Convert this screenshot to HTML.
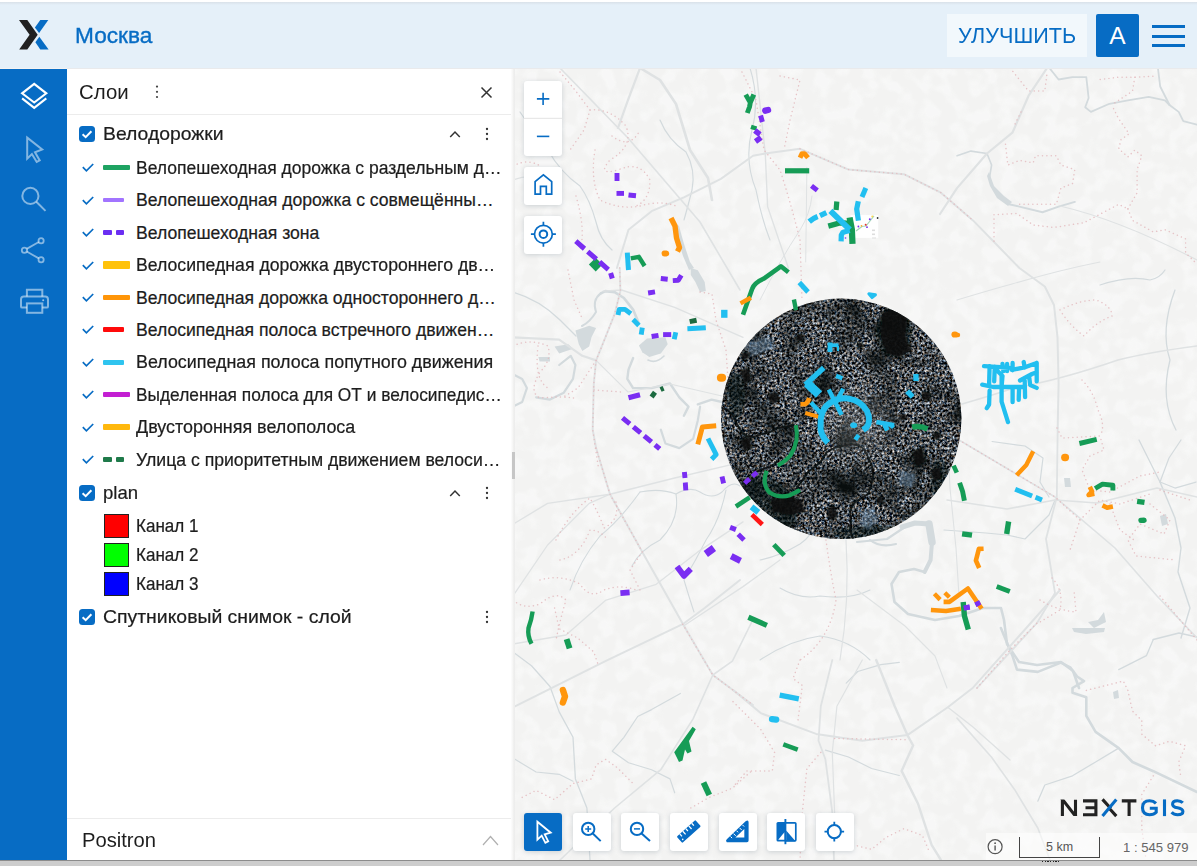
<!DOCTYPE html>
<html lang="ru">
<head>
<meta charset="utf-8">
<title>Москва</title>
<style>
*{box-sizing:border-box;margin:0;padding:0}
html,body{width:1197px;height:866px;overflow:hidden;background:#fff;font-family:"Liberation Sans",sans-serif;color:#1d1d1d}
#app{position:absolute;left:0;top:0;width:1197px;height:866px;overflow:hidden;background:#fff}
.abs{position:absolute}
#header{position:absolute;left:0;top:2px;width:1197px;height:66px;background:#e5f0f9}
#hshadow{position:absolute;left:0;top:2px;width:1197px;height:3px;background:linear-gradient(#d9e1e9,#e5f0f9)}
#title{position:absolute;left:75px;top:23px;font-size:22px;transform:scaleX(1.03);transform-origin:0 50%;line-height:26px;color:#076cc4;white-space:nowrap;-webkit-text-stroke:.35px #076cc4}
#upg{position:absolute;left:947px;top:14px;width:140px;height:43px;background:#f2f8fc;color:#076cc4;font-size:22px;line-height:43px;text-align:center;white-space:nowrap}
#ava{position:absolute;left:1096px;top:14px;width:42.6px;height:43px;background:#076cc4;color:#fff;font-size:24.5px;line-height:44px;text-align:center;border-radius:2px}
.hb{position:absolute;left:1152px;width:32.5px;height:3.2px;background:#076cc4}
#side{position:absolute;left:0;top:68px;width:67px;height:792px;background:#076cc4}
#panel{position:absolute;left:67px;top:68px;width:446px;height:792px;background:#fff}
#pedge{position:absolute;left:511.4px;top:68px;width:3.2px;height:792px;background:linear-gradient(90deg,#fdfdfd,#f4f4f3 55%,#eaeaea 75%,#f1f1f0)}
#phandle{position:absolute;left:511.6px;top:452.3px;width:3px;height:27px;background:#c6c6c6}
#phead{position:absolute;left:0;top:0;width:446px;height:47px;border-bottom:1px solid #ececec}
#ptitle{position:absolute;left:11.6px;top:11px;font-size:21px;transform:scaleX(.972);transform-origin:0 50%;line-height:26px;white-space:nowrap}
.row{position:absolute;left:0;width:446px;height:32px;white-space:nowrap}
.row .t{position:absolute;left:69px;top:0;font-size:17.6px;line-height:32px;white-space:nowrap;transform-origin:0 50%;-webkit-text-stroke:.22px #1d1d1d}
.row .g{position:absolute;left:36px;top:0;font-size:19px;line-height:32px;white-space:nowrap;transform-origin:0 50%;-webkit-text-stroke:.22px #1d1d1d}
.cb{position:absolute;left:12px;top:8px;width:16px;height:16px;background:#076cc4;border-radius:3.5px}
.ck{position:absolute;left:13px;top:9px;width:14px;height:14px}
.sw{position:absolute;left:37.2px;top:4px;width:25px;height:24px;border:1.4px solid #222}
#pfoot{position:absolute;left:0;top:750px;width:446px;height:42px;border-top:1px solid #ececec}
#pfoot span{position:absolute;left:14.6px;top:9px;font-size:19.6px;line-height:24px;transform:scaleX(1.03);transform-origin:0 50%}
#map{position:absolute;left:513px;top:68px;width:684px;height:792px;overflow:hidden;background:#f4f5f5}
.mb{position:absolute;width:38px;height:38px;background:#fff;border-radius:3px;box-shadow:0 1px 5px rgba(60,80,100,.22)}
.mb svg{position:absolute;left:0;top:0}
#bottom{position:absolute;left:0;top:860px;width:1197px;height:6px;background:#cdcdcd;border-top:1px solid #8c8c8c}
</style>
</head>
<body>
<div id="app">
<div id="header"></div>
<div id="hshadow"></div>
<svg class="abs" style="left:19.3px;top:20.1px" width="30" height="30" viewBox="0 0 30 30"><polygon points="21.3,0 29.3,0 20.1,13.1 15.9,7.4" fill="#076cc4"/><polygon points="20.3,16.8 29.6,29.5 21.3,29.5 16.4,22.2" fill="#076cc4"/><polygon points="0,0 8.3,0 18.7,14.8 8.3,29.5 0.2,29.5 10.6,14.8" fill="#212121"/></svg>
<div id="title">Москва</div>
<div id="upg"><span id="upgt" style="display:inline-block;transform:scaleX(.982)">УЛУЧШИТЬ</span></div>
<div id="ava">A</div>
<div class="hb" style="top:24.6px"></div><div class="hb" style="top:34.7px"></div><div class="hb" style="top:44px"></div>
<div id="side"><svg class="abs" style="left:0;top:0" width="67" height="300" viewBox="0 68 67 300" fill="none" stroke-linejoin="miter">
<g stroke="#fff" stroke-width="2.1"><path d="M34.2 83.9 L46.3 93.3 L34.2 102.5 L22.1 93.3 Z"/><path d="M22.1 98.4 L34.2 107.8 L46.3 98.4"/></g>
<g stroke="#fff" stroke-opacity=".5" stroke-width="2">
<path d="M27.2 137.6 V158.6 L31.9 154 L36.7 162 L39.7 160.4 L35 152.3 L42.2 149.5 Z"/>
<circle cx="30.4" cy="195.9" r="8.1"/><path d="M36.3 201.8 L45.5 210.9"/>
<g stroke-width="1.8"><circle cx="41.1" cy="240.7" r="2.6"/><circle cx="24.4" cy="250.2" r="2.6"/><circle cx="41.1" cy="259.7" r="2.6"/><path d="M26.7 248.9 L38.8 242 M26.7 251.5 L38.8 258.4"/></g>
<path d="M26.9 296.4 V289.7 H42.3 V296.4"/><path d="M26.9 307.6 H22.2 Q21 307.6 21 306.4 V299.4 Q21 296.6 23.8 296.6 H45.2 Q48 296.6 48 299.4 V306.4 Q48 307.6 46.8 307.6 H42.3"/><rect x="26.9" y="303.4" width="15.4" height="9.4"/>
</g><circle cx="43.2" cy="300.3" r="1" fill="#fff" fill-opacity=".6"/></svg></div>
<div id="panel">
<div id="phead"><div id="ptitle">Слои</div><svg class="abs" style="left:87.5px;top:17px" width="4" height="14" viewBox="0 0 4 14"><circle cx="2" cy="1.6" r="1.1" fill="#444"/><circle cx="2" cy="6.8" r="1.1" fill="#444"/><circle cx="2" cy="12" r="1.1" fill="#444"/></svg>
<svg class="abs" style="left:413px;top:17.5px" width="13" height="13" viewBox="0 0 13 13"><path d="M1.5 1.5 L11.5 11.5 M11.5 1.5 L1.5 11.5" stroke="#333" stroke-width="1.5" fill="none"/></svg></div>
<!--ROWS-->
<div class="row" style="top:49.8px"><div class="cb"><svg width="16" height="16" viewBox="0 0 16 16"><path d="M3.6 8.2 L6.7 11.2 L12.4 5.2" fill="none" stroke="#fff" stroke-width="2"/></svg></div><span class="g" id="g1" style="transform:scaleX(1.02)">Велодорожки</span><svg class="abs" style="left:382px;top:12.5px" width="12" height="8" viewBox="0 0 12 8"><path d="M1.2 7 L6 2 L10.8 7" fill="none" stroke="#333" stroke-width="1.5"/></svg><svg class="abs" style="left:418px;top:9px" width="4" height="14" viewBox="0 0 4 14"><circle cx="2" cy="2" r="1.15" fill="#333"/><circle cx="2" cy="7" r="1.15" fill="#333"/><circle cx="2" cy="12" r="1.15" fill="#333"/></svg></div>
<div class="row" style="top:83.7px"><svg class="ck" viewBox="0 0 14 14" style="left:13.5px;top:9.5px"><path d="M1.8 6.2 L5.4 9.8 L12.2 3" fill="none" stroke="#076cc4" stroke-width="1.7"/></svg><div class="abs" style="left:36.4px;top:13.8px;width:26.5px;height:4.4px;background:#1ea362;border-radius:1px"></div><span class="t" id="t0" style="transform:scaleX(0.996)">Велопешеходная дорожка с раздельным д…</span></div>
<div class="row" style="top:116.2px"><svg class="ck" viewBox="0 0 14 14" style="left:13.5px;top:9.5px"><path d="M1.8 6.2 L5.4 9.8 L12.2 3" fill="none" stroke="#076cc4" stroke-width="1.7"/></svg><div class="abs" style="left:36.4px;top:13.7px;width:21px;height:4.6px;background:#a274ff;border-radius:1px"></div><span class="t" id="t1">Велопешеходная дорожка с совмещённы…</span></div>
<div class="row" style="top:148.6px"><svg class="ck" viewBox="0 0 14 14" style="left:13.5px;top:9.5px"><path d="M1.8 6.2 L5.4 9.8 L12.2 3" fill="none" stroke="#076cc4" stroke-width="1.7"/></svg><div class="abs" style="left:36.4px;top:13.6px;width:8.4px;height:4.8px;background:#6b2ef2;border-radius:1px"></div><div class="abs" style="left:49px;top:13.6px;width:8.4px;height:4.8px;background:#6b2ef2;border-radius:1px"></div><span class="t" id="t2">Велопешеходная зона</span></div>
<div class="row" style="top:181.1px"><svg class="ck" viewBox="0 0 14 14" style="left:13.5px;top:9.5px"><path d="M1.8 6.2 L5.4 9.8 L12.2 3" fill="none" stroke="#076cc4" stroke-width="1.7"/></svg><div class="abs" style="left:36.4px;top:12.4px;width:26.5px;height:7.2px;background:#ffc20a;border-radius:1px"></div><span class="t" id="t3" style="transform:scaleX(1.004)">Велосипедная дорожка двустороннего дв…</span></div>
<div class="row" style="top:213.5px"><svg class="ck" viewBox="0 0 14 14" style="left:13.5px;top:9.5px"><path d="M1.8 6.2 L5.4 9.8 L12.2 3" fill="none" stroke="#076cc4" stroke-width="1.7"/></svg><div class="abs" style="left:36.4px;top:13.5px;width:26.5px;height:5px;background:#ff9508;border-radius:1px"></div><span class="t" id="t4">Велосипедная дорожка одностороннего д…</span></div>
<div class="row" style="top:245.9px"><svg class="ck" viewBox="0 0 14 14" style="left:13.5px;top:9.5px"><path d="M1.8 6.2 L5.4 9.8 L12.2 3" fill="none" stroke="#076cc4" stroke-width="1.7"/></svg><div class="abs" style="left:36.4px;top:13.6px;width:21px;height:4.8px;background:#ff0a0a;border-radius:1px"></div><span class="t" id="t5">Велосипедная полоса встречного движен…</span></div>
<div class="row" style="top:278.4px"><svg class="ck" viewBox="0 0 14 14" style="left:13.5px;top:9.5px"><path d="M1.8 6.2 L5.4 9.8 L12.2 3" fill="none" stroke="#076cc4" stroke-width="1.7"/></svg><div class="abs" style="left:36.4px;top:13.6px;width:21px;height:4.8px;background:#2fc4ef;border-radius:1px"></div><span class="t" id="t6" style="transform:scaleX(1.016)">Велосипедная полоса попутного движения</span></div>
<div class="row" style="top:310.9px"><svg class="ck" viewBox="0 0 14 14" style="left:13.5px;top:9.5px"><path d="M1.8 6.2 L5.4 9.8 L12.2 3" fill="none" stroke="#076cc4" stroke-width="1.7"/></svg><div class="abs" style="left:36.4px;top:13.6px;width:26.5px;height:4.8px;background:#c31fd2;border-radius:1px"></div><span class="t" id="t7" style="transform:scaleX(0.984)">Выделенная полоса для ОТ и велосипедис…</span></div>
<div class="row" style="top:343.3px"><svg class="ck" viewBox="0 0 14 14" style="left:13.5px;top:9.5px"><path d="M1.8 6.2 L5.4 9.8 L12.2 3" fill="none" stroke="#076cc4" stroke-width="1.7"/></svg><div class="abs" style="left:36.4px;top:13.0px;width:26.5px;height:6px;background:#ffb80d;border-radius:1px"></div><span class="t" id="t8" style="transform:scaleX(1.019)">Двусторонняя велополоса</span></div>
<div class="row" style="top:375.8px"><svg class="ck" viewBox="0 0 14 14" style="left:13.5px;top:9.5px"><path d="M1.8 6.2 L5.4 9.8 L12.2 3" fill="none" stroke="#076cc4" stroke-width="1.7"/></svg><div class="abs" style="left:36.4px;top:13.6px;width:8.4px;height:4.8px;background:#1f7a4a;border-radius:1px"></div><div class="abs" style="left:49px;top:13.6px;width:8.4px;height:4.8px;background:#1f7a4a;border-radius:1px"></div><span class="t" id="t9" style="transform:scaleX(1.002)">Улица с приоритетным движением велоси…</span></div>
<div class="row" style="top:408.6px"><div class="cb"><svg width="16" height="16" viewBox="0 0 16 16"><path d="M3.6 8.2 L6.7 11.2 L12.4 5.2" fill="none" stroke="#fff" stroke-width="2"/></svg></div><span class="g" id="g2" style="transform:scaleX(0.978)">plan</span><svg class="abs" style="left:382px;top:12.5px" width="12" height="8" viewBox="0 0 12 8"><path d="M1.2 7 L6 2 L10.8 7" fill="none" stroke="#333" stroke-width="1.5"/></svg><svg class="abs" style="left:418px;top:9px" width="4" height="14" viewBox="0 0 4 14"><circle cx="2" cy="2" r="1.15" fill="#333"/><circle cx="2" cy="7" r="1.15" fill="#333"/><circle cx="2" cy="12" r="1.15" fill="#333"/></svg></div>
<div class="row" style="top:441.5px"><div class="sw" style="background:#ff0000"></div><span class="t" id="k0" style="transform:scaleX(0.97)">Канал 1</span></div>
<div class="row" style="top:470.9px"><div class="sw" style="background:#00ff00"></div><span class="t" id="k1" style="transform:scaleX(0.97)">Канал 2</span></div>
<div class="row" style="top:500.3px"><div class="sw" style="background:#0000ff"></div><span class="t" id="k2" style="transform:scaleX(0.97)">Канал 3</span></div>
<div class="row" style="top:532.8px"><div class="cb"><svg width="16" height="16" viewBox="0 0 16 16"><path d="M3.6 8.2 L6.7 11.2 L12.4 5.2" fill="none" stroke="#fff" stroke-width="2"/></svg></div><span class="g" id="g3" style="transform:scaleX(1.021)">Спутниковый снимок - слой</span><svg class="abs" style="left:418px;top:9px" width="4" height="14" viewBox="0 0 4 14"><circle cx="2" cy="2" r="1.15" fill="#333"/><circle cx="2" cy="7" r="1.15" fill="#333"/><circle cx="2" cy="12" r="1.15" fill="#333"/></svg></div>
<!--/ROWS-->
<div id="pfoot"><span>Positron</span><svg class="abs" style="left:414.5px;top:15.5px" width="17" height="11" viewBox="0 0 17 11"><path d="M1 10 L8.5 1.5 L16 10" stroke="#b0b0b0" stroke-width="1.2" fill="none"/></svg></div>
</div>
<div id="map">
<!--MAPSVG-->
<svg class="abs" style="left:0;top:0" width="684" height="792" viewBox="513 68 684 792"><defs>
<clipPath id="cclip"><circle cx="841.2" cy="418.8" r="120.2"/></clipPath>
<radialGradient id="cglow"><stop offset="0" stop-color="#fff" stop-opacity=".2"/><stop offset="1" stop-color="#fff" stop-opacity="0"/></radialGradient><clipPath id="mclip"><rect x="513" y="68" width="684" height="792"/></clipPath>
<filter id="blotch" x="0" y="0" width="100%" height="100%" color-interpolation-filters="sRGB"><feTurbulence type="fractalNoise" baseFrequency=".065" numOctaves="2" seed="8"/><feColorMatrix type="matrix" values="0 0 0 0 .98  0 0 0 0 .982  0 0 0 0 .98  4 0 0 0 -1.75"/></filter><filter id="soft" x="513" y="68" width="684" height="792" filterUnits="userSpaceOnUse"><feGaussianBlur stdDeviation=".45"/></filter><filter id="blur3"><feGaussianBlur stdDeviation="3"/></filter>
<filter id="blur1"><feGaussianBlur stdDeviation="1.2"/></filter>
<filter id="blur05"><feGaussianBlur stdDeviation=".5"/></filter>
<filter id="lowf" x="0" y="0" width="100%" height="100%" color-interpolation-filters="sRGB"><feTurbulence type="fractalNoise" baseFrequency=".03" numOctaves="3" seed="4"/><feColorMatrix type="matrix" values="0 0 0 0 .03  0 0 0 0 .05  0 0 0 0 .05  2.2 0 0 0 -.95"/></filter>
<filter id="noise" x="0" y="0" width="100%" height="100%" color-interpolation-filters="sRGB"><feTurbulence type="fractalNoise" baseFrequency=".4" numOctaves="3" seed="5"/><feColorMatrix type="matrix" values="1.75 .4 0 0 -.77  1.75 .2 .2 0 -.75  1.75 0 .4 0 -.73  0 0 0 0 1"/></filter>

</defs><g clip-path="url(#mclip)"><rect x="513" y="68" width="684" height="792" fill="#f3f3f2"/>
<rect x="513" y="68" width="684" height="792" filter="url(#blotch)" opacity=".7"/>
<g fill="#d3dadd" stroke="none"><path d="M690.8 268 L697.8 270.3 L704.7 281.9 L705.8 291.1 L700.1 292.2 L695.4 281.9 L690.8 274.9 Z"/><path d="M673 222 L679 226 L684 244 L690 262 L694 268 L689 270 L683 256 L678 240 L674 230 Z"/><path d="M638.9 345.4 L647 338.4 L665.4 337.3 L667.7 344.2 L660.8 353.5 L649.3 356.9 L642.3 352.3 Z"/><path d="M575.4 330.4 L589.2 325.7 L596.1 328 L591.5 337.3 L589.2 346.5 L582.3 351.1 L578.8 344.2 Z"/><path d="M554.6 346.5 L568.4 344.2 L573 348.8 L559.2 353.5 Z"/><path d="M538.4 356.9 H550 V361.5 H539.6 Z"/><path d="M989 172 L994 186 L1004 196 L1012 202 L1008 206 L997 198 L990 186 L987 176 Z"/><path d="M1072 628 L1105 628 L1104 632 L1086 634 L1074 632 Z"/><path d="M1113 692 L1118 690 L1119 698 L1114 699 Z"/><path d="M1064 478 L1070 478 L1071 487 L1065 487 Z"/><path d="M1088 622 L1098 620 L1104 612 L1106 622 L1094 628 Z"/><path d="M1160 516 L1166 514 L1168 524 L1162 526 Z"/></g>
<g fill="none" stroke="#d3dadd" stroke-linecap="round" stroke-linejoin="round"><path d="M600.8 293.4 L605.4 291.1 L614.6 292.2 L623.9 298 L633.1 309.6 L638.9 323.4" stroke-width="2.6"/><path d="M633.1 358.1 L628.5 369.6 L627.3 378.9 L633.1 388.1 L651.6 388.1 L670 383.5 L679.3 397.3 L688.5 406.6 L683.9 415.8" stroke-width="2.4"/><path d="M648 360 Q656 364 664 356" stroke-width="1.6"/><path d="M697.8 404.3 L711.6 399.6 L722 402" stroke-width="2.4"/><path d="M660.8 429.7 L665.4 443.5 L679.3 448.1 L693.1 438.9 L697.8 420.4 L700.1 406.6" stroke-width="2.2"/><path d="M513 374.2 L522.2 378.9 L526.9 388.1 L522.2 402 L513 406.6" stroke-width="2.2"/><path d="M559.2 365 L570.7 355.8 L575.4 365 L573 378.9 L563.8 392.7 L550 399.6 L536.1 397.3" stroke-width="2.2"/><path d="M600.8 293.4 Q592 300 596 312 Q590 322 582 326" stroke-width="2"/><path d="M513 292 Q540 300 560 320 Q570 330 576 336" stroke-width="1.3"/><path d="M902 527 L915 523 L929 524" stroke-width="5"/><path d="M929 524 L932 542" stroke-width="7.5"/><path d="M932 542 L930.6 560 L924.6 572" stroke-width="4"/><path d="M924.6 572 L914 569 L899 572 L891.5 584 L894.5 602 L908 614 L935 620 L959 616 L983 608 L1001 608 L1004 620 L1007 644 L1019 662 L1037 665 L1061 662 L1073 671 L1079 688" stroke-width="2.6"/><path d="M857 542 L887 539 L905 527" stroke-width="2.2"/><path d="M944 530 L986 533 L1007 535 L1025 539 L1049 515 L1055 500" stroke-width="1.2"/><path d="M992 441.5 L1025 446 L1043 458 L1040 482 L1049 497" stroke-width="1.2"/><path d="M1139 440 L1151 464 L1160 482 L1175 488 L1196 482" stroke-width="1.3"/><path d="M1181 440 L1169 458 L1160 482" stroke-width="1.2"/><path d="M1160 482 L1175 518 L1181 548 L1178 572 L1190 608 L1181 638" stroke-width="1.4"/><path d="M870 540 Q880 548 896 544" stroke-width="2.2"/><path d="M1000.9 628 L1012.4 655.7 L1017 669.6 L1037.8 671.9 L1060.9 662.6 L1070.2 667.3 L1077.1 676.5 L1084 681.1 L1072.5 688 L1072.5 692.7 L1086.3 697.3 L1086.3 715.8 L1095.6 731.9 L1118.7 748.1 L1132.5 762 L1153.3 771.2 L1197 792" stroke-width="2.6"/><path d="M1118.7 748.1 L1095.6 762 L1072.5 775.8 L1044.8 785 L1037.8 801.2" stroke-width="1.3"/><path d="M1153.3 639.5 L1146.4 655.7 L1118.7 669.6" stroke-width="1.3"/><path d="M1153.3 639.5 L1179 633 L1197 637" stroke-width="1.6"/><path d="M1049.4 68 L1058.6 79.5 L1072.5 77.2 L1086.3 77.2 L1088.6 98 L1085.2 107.3 L1090.9 111.9 L1109.4 103.8 L1127.9 100.3 L1148.7 96.9 L1164.9 100.3 L1169.5 105" stroke-width="1.8"/><path d="M1157.9 68 L1160.2 86.5 L1169.5 105 L1178.7 111.9 L1183.3 121.1 L1197 124.6" stroke-width="1.8"/><path d="M957 155.8 L970.9 151.1 L987 153.5 L991.6 165 L989.3 178.9" stroke-width="1.6"/><path d="M1008 204 L1019.4 206.6 L1042.5 212.3 L1058.6 206.6 L1074.8 201.9" stroke-width="2"/><path d="M1100 285 Q1130 275 1150 280 Q1160 278 1165 270" stroke-width="1.2"/><path d="M1175 290 Q1160 330 1170 360 Q1160 400 1176 430" stroke-width="1.3"/><path d="M520 112 Q532 130 548 150 Q560 172 580 186 Q590 200 596 222 Q600 240 612 250" stroke-width="1.2"/><path d="M660 120 Q668 140 686 152 Q696 170 692 190 Q688 206 684 220" stroke-width="1.2"/><path d="M750 68 Q760 100 752 130 Q744 160 756 190 Q762 220 770 240" stroke-width="1.1"/><path d="M513 651.9 L531.5 665.7 L550 686.5 L559.2 711.9 L573 737.3 L575.4 778.9 L586.9 808 L590 860" stroke-width="1.3"/><path d="M680.4 693.5 L651.6 709.6 L637.7 716.5 L623.9 737.3 L612.3 751.2 L628.5 762.7 L651.6 769.7 L670 778.9 L674.7 792.8" stroke-width="1.2"/><path d="M513 758.1 L536.1 772 L559.2 774.3 L573 781.2" stroke-width="1.2"/><path d="M640 492 Q660 488 676 494 Q690 486 700 492 Q712 500 722 492 Q732 480 740 486" stroke-width="1.1"/><path d="M640 492 Q620 520 600 536 Q580 560 570 590" stroke-width="1.1"/><path d="M676 494 Q680 520 660 540 Q640 550 632 566" stroke-width="1.1"/><path d="M726 490 Q720 520 706 540 Q696 560 684 580 Q690 600 694 612" stroke-width="1.1"/><path d="M760 560 Q780 556 800 544 Q812 536 818 520" stroke-width="1.1"/><path d="M760 660 Q790 640 820 636 Q850 640 870 660" stroke-width="1.1"/><path d="M825.4 750.1 L848.5 757 L871.6 768.5 L899.3 775.5" stroke-width="1.2"/><path d="M846.2 683.1 L857.7 671.5 L880.8 664.6 L899.3 662.3" stroke-width="1.2"/><path d="M780 588 Q800 600 820 596 Q850 600 870 590" stroke-width="1.1"/></g>
<g fill="none" stroke="#dfe2e3" stroke-linecap="round" stroke-linejoin="round"><path d="M560 68 L628 138 L700 222 L740 290" stroke-width="1.6"/><path d="M640 68 L660 80 L676 104 L690 150 L708 178 L712 200" stroke-width="2.6"/><path d="M640 68 L628 100 L618 128" stroke-width="2.2"/><path d="M619.7 268 L620.4 291 L614.6 314.2 L605.4 337.3 L596.1 360.4 L593.8 383.5 L592.7 429.7 L596.1 448 L610 494.2 L642.3 551.9 L683.9 625.8 L712.8 675 L753 705" stroke-width="2"/><path d="M513 337.3 L559.2 339.6 L582.3 355.8 L596.1 360.4" stroke-width="2.2"/><path d="M603.1 291.1 L621.5 290 L674.7 307.3 L743 337.3" stroke-width="1.4"/><path d="M596.1 360.4 L628 392 L670 384 L722 396" stroke-width="1.1"/><path d="M616.9 268 L628.5 229.7 L651.6 211.2 L683.9 197.3 L720.9 178.9 L753 155.8 L765.3 153.5 L800 148.8 L848.5 169.6 L903.9 174.2 L940.9 192.7 L973 220.4 L1019.4 268 L1044.8 286.5 L1054 305 L1057.5 337.3 L1058.6 383.5 L1057.7 428" stroke-width="2"/><path d="M756 68 L765.3 153.5 L767.6 206.6 L788.4 268" stroke-width="1.4"/><path d="M1047.1 68 L1028.6 95.7 L1012.4 132.7 L987 153.5 L957 188.1 L940 214" stroke-width="2.2"/><path d="M1197 346 Q1150 352 1118 360 Q1060 380 1014 388 Q990 396 962 404" stroke-width="1.6"/><path d="M957 300 Q990 290 1012 284 Q1060 270 1100 262" stroke-width="1.1"/><path d="M513 180 Q540 170 560 190" stroke-width="1.2"/><path d="M513 524.2 L547.6 503.4 L610 494.2 L674.7 478 L743 461.9" stroke-width="1.4"/><path d="M513 595.8 L547.6 545 L589.2 503.4 L610 494.2" stroke-width="1.3"/><path d="M513 644 L566 635 L605.4 600.4 L656.2 584.3 L697.8 551.9 L743 521.9" stroke-width="1.3"/><path d="M683.9 625.8 L743 586.6 L780 560" stroke-width="1.3"/><path d="M513 707.3 L605.4 661.1 L682.7 624.2 L704.7 608 L740 580" stroke-width="2"/><path d="M753 619.5 L732.4 661.1 L712.8 675 L693.1 718.9 L660.8 769.7 L614.6 808 L560 860" stroke-width="1.6"/><path d="M733 690 L760.7 713.1 L816.1 733.9 L862.3 740.8 L907.4 735.1 L947.8 707.3 L973 687.7 L1026.3 628 L1060 590" stroke-width="2"/><path d="M832.3 660 L820.8 706.2 L818.5 740.8 L825.4 759.3 L832.3 812.4 L834 860" stroke-width="1.8"/><path d="M862.3 660 L836.9 706.2 L832.3 752.4 L834.6 812.4" stroke-width="1.2"/><path d="M876.2 660 L894.7 706.2 L907.4 735.1 L913.1 745.5 L901.6 770.9 L917.8 803.2 L931.6 844.8 L940.9 860" stroke-width="2.4"/><path d="M947.8 707.3 L973 727 L1010 760" stroke-width="1.3"/><path d="M957 718.1 L991.6 757.3 L1014.7 789.7 L1037.8 828 L1050 860" stroke-width="1.6"/><path d="M1057.7 428 L1056.8 497 L1046 539 L1055 593 L1037 623 L977 688" stroke-width="1.8"/><path d="M959 440 L1055 497 L1115 548 L1157 596 L1197 638" stroke-width="1.6"/><path d="M947 500 L1007 509 L1055 500 L1097 503 L1157 488 L1197 497" stroke-width="1.6"/><path d="M947 428 L950 488 L956 548 L959 596" stroke-width="1.1"/><path d="M857 590 L905 626 L935 656 L947 688" stroke-width="1.1"/><path d="M846 540 Q850 600 840 660" stroke-width="1.2"/><path d="M1060 206 Q1120 220 1197 260" stroke-width="1.2"/><path d="M760 300 Q780 260 800 230 Q810 214 812 196" stroke-width="1"/><path d="M806.9 167.3 L805.7 262" stroke-width="1"/></g>
<g fill="none" stroke="#e3b9bd" stroke-width="1.5" stroke-dasharray=".1 4.3" stroke-linecap="round" opacity=".8"><path d="M560 72 L575 90 L590 110 L584 130 L570 150"/><path d="M590 110 Q610 108 626 126 Q634 146 610 160 Q596 176 618 170 Q640 160 650 180 Q650 200 636 206"/><path d="M513 166 Q528 158 540 166"/><path d="M576 196 Q586 230 580 250"/><path d="M612 136 Q630 150 640 130"/><path d="M595 150 Q590 180 600 200 Q620 210 640 206 Q660 200 676 206"/><path d="M568 270 L574 300 L582 318"/><path d="M513 346 Q530 338 548 346 Q552 360 540 372 Q528 392 540 398 Q560 396 574 398"/><path d="M538 346 Q534 380 548 388"/><path d="M619.7 268 L620.4 291 L614.6 314.2 L605.4 337.3 L596.1 360.4 L593.8 383.5 L592.7 429.7 L598.5 468"/><path d="M596.1 360.4 L578 388 L562 398"/><path d="M594 390 L622 392"/><path d="M700 292 L712 294 L716 320 L726 350 L728 380"/><path d="M596.1 448 L610 494.2 L642.3 551.9 L630 570 L640 590"/><path d="M556 540 Q570 512 590 498 Q600 516 604 528 Q620 520 616 502"/><path d="M560 560 Q580 556 590 530 Q600 530 608 540"/><path d="M540 580 Q560 574 580 584 Q590 600 604 590 Q620 584 636 590"/><path d="M513 600 Q524 610 540 604 Q556 590 566 600 Q560 620 556 640"/><path d="M554.6 608 L559.2 628.8 L577.7 638 L593.8 651.9 L598.5 665.7"/><path d="M522.2 797.4 L536.1 790.4 L554.6 799.7 L573 783.5 L591.5 778.9 L596.1 765 L605.4 759.3 L616.9 767.4 L633.1 783.5"/><path d="M690.8 808 L709.3 797.4 L732.4 788.1 L753 769.7"/><path d="M682.7 624.2 L712.8 675 L753 705"/><path d="M742 72 L756 100 L764 150 L780 170 Q790 200 800 240 L802 300"/><path d="M780 76 L800 80 L790 120 L784 150"/><path d="M800 148.8 L848.5 169.6 L903.9 174.2 L940.9 192.7 L973 220.4"/><path d="M1010.1 68 L1028.6 91.1 L1044.8 91.1 L1047.1 72.6"/><path d="M1021 112 L1014 126"/><path d="M1005.5 144.2 L1007.8 165 L1019.4 160.4 L1033.2 162.7 L1035.5 155.8 L1056.3 155.8 L1060.9 165 L1074.8 169.6 L1072.5 183.5 L1060.9 188.1 L1056.3 204.3 L1019.4 204.3"/><path d="M994 241.2 L994 214.7 L1017 213.5 L1033.2 225 L1054 227.4 L1084 222.7 L1118.7 204.3 L1127.9 208.9"/><path d="M1127.9 208.9 L1137.1 192.7 L1137.1 169.6 L1141.8 155.8 L1134.8 150 L1127.9 156.9 L1118.7 148.8 L1121 139.6 L1129.1 133.8 L1118.7 118.8 L1111.7 105"/><path d="M1100.2 79.5 L1118.7 77.2 L1134.8 77.2 L1155.6 76.1"/><path d="M1134.8 77.2 L1132.5 91.1 L1111.7 105"/><path d="M1127.9 208.9 L1132.5 220.4 L1153.3 232 L1164.9 229.7 L1185.6 238.9 L1185.6 252.8 L1194.9 262"/><path d="M1060 310 Q1080 300 1096 300 Q1112 306 1112 316 Q1096 322 1084 336 Q1070 326 1060 310"/><path d="M1057 428 L1062 438 L1100 436 L1104 450 L1090 456 L1082 470 L1090 490 L1110 492 L1140 476 L1160 472"/><path d="M1082 380 Q1094 392 1098 410 Q1106 426 1100 436"/><path d="M959 440 L1055 497 L1080 520 L1070 550"/><path d="M1080 520 L1100 500 L1120 504 L1150 494"/><path d="M1160 490 L1190 500 M1150 504 L1170 520 L1164 534 L1140 524 L1128 540 L1136 556 L1176 560"/><path d="M1110 504 L1120 530 L1134 540"/><path d="M826 540 Q830 570 836 600 Q830 640 800 660"/><path d="M800 660 L793 678.5 L802.3 685.4 L797.7 722.4"/><path d="M733 701.6 L760.7 729.3 L774.6 752.4 L772.3 770.9 L746.9 770.9 L733 787"/><path d="M820.8 752.4 L806.9 768.5 L802.3 812.4 L800 860"/><path d="M834.6 738.5 L906.2 739.7"/><path d="M853.1 844.8 L871.6 849.4 L885.4 837.8 L903.9 828.6 L922.4 835.5 L929.3 851.7"/><path d="M1086.3 690.4 L1104.8 685.7 L1123.3 681.1 L1127.9 690.4 L1132.5 711.1 L1141.8 720.4 L1141.8 734.2 L1155.6 745.8 L1169.5 741.2 L1185.6 745.8 L1178.7 762 L1181 778.1"/><path d="M1153.3 775.8 L1141.8 794.3 L1141.8 828 L1146 860"/><path d="M1052 578 Q1064 590 1060 610 L1040 622"/><path d="M1040 600 Q1056 610 1076 612 L1074 590"/><path d="M977 688 L1010 650 L1037 623"/><path d="M1160 596 L1197 640"/></g>
<g clip-path="url(#cclip)">
<rect x="720" y="298" width="242" height="242" filter="url(#noise)"/>
<rect x="720" y="298" width="242" height="242" filter="url(#lowf)"/>
<g fill="#060a08" opacity=".55" filter="url(#blur3)"><ellipse cx="768" cy="502" rx="34" ry="22" transform="rotate(40 768 502)"/><ellipse cx="872" cy="533" rx="42" ry="8"/><ellipse cx="736" cy="396" rx="9" ry="24"/><ellipse cx="894" cy="332" rx="18" ry="26"/><ellipse cx="940" cy="480" rx="10" ry="22"/></g>
<g fill="#070c09" opacity=".88" filter="url(#blur1)">
<path d="M882 312 L900 306 L908 318 L906 338 L912 350 L900 358 L886 354 L880 338 Z"/>
<circle cx="773.5" cy="397.5" r="6"/><circle cx="926" cy="396" r="5"/><path d="M912 452 L922 446 L926 462 L916 468 Z"/>
<path d="M770 500 L786 494 L802 500 L806 512 L790 516 L772 512 Z"/><circle cx="745" cy="356" r="4"/><circle cx="800" cy="338" r="4"/>
<path d="M826 510 L834 504 L838 516 L830 522 Z"/><circle cx="880" cy="500" r="4"/><path d="M740 440 L750 436 L752 448 L744 452 Z"/>
<circle cx="903" cy="417" r="3.5"/><circle cx="937" cy="436" r="4"/><circle cx="860" cy="345" r="3"/>
<path d="M740 372 L748 366 L752 380 L744 384 Z"/><path d="M930 470 L940 466 L942 478 L934 482 Z"/>
</g>
<g fill="none" stroke="#070b0c" stroke-width="1.9" stroke-linecap="round" stroke-linejoin="bevel" filter="url(#blur05)" opacity=".85">
<path d="M722 408 L728 410 L733 416 L737 424 L741 431 L746 436 L754 437 L762 434 L770 432 L778 428 L786 427 L793 425"/>
<path d="M797 487 L803 480 L808 472 L815 467 L822 460 L827 452 L834 448 L842 446 L851 444 L858 445 L864 449 L868 457 L872 466 L873 476 L871 486 L868 494 L860 499 L853 504 L850 512 L851 522 L850 530 L853 539"/>
<path d="M758 471 L765 468 L771 466 L777 462"/>
</g>
<circle cx="858" cy="424" r="46" fill="url(#cglow)"/><g fill="#7fa3c4" opacity=".4" filter="url(#blur1)"><path d="M862 512 L874 506 L878 520 L868 530 L860 524 Z"/><path d="M744 344 L770 336 L776 348 L752 356 Z"/><path d="M900 470 L916 474 L912 488 L898 484 Z"/></g>
</g>
<g fill="none" stroke-linecap="butt" stroke-linejoin="round" filter="url(#soft)">
<rect x="850.5" y="215.1" width="27.7" height="22.8" fill="#fff" stroke="none"/><path d="M856 231 L862 226.5 L866 226 L874 215.8" stroke="#a6d9bb" stroke-width="1.2"/><g stroke="none"><circle cx="858.4" cy="226.5" r=".9" fill="#7a2df2"/><circle cx="861.5" cy="225.8" r=".9" fill="#ffa726"/><circle cx="865.7" cy="224.8" r="1" fill="#e53935"/><circle cx="867" cy="227.2" r=".9" fill="#7a2df2"/><circle cx="869.8" cy="219.3" r="1" fill="#7a2df2"/><circle cx="872.3" cy="216.5" r="1" fill="#ffd54f"/><circle cx="877.6" cy="218" r=".9" fill="#333"/><circle cx="845.5" cy="238" r=".9" fill="#9b6cf5"/><rect x="872" y="229.5" width="3" height="1.6" fill="#ddd"/><rect x="872" y="233.5" width="3" height="1.6" fill="#ddd"/><rect x="872" y="237.5" width="4" height="1" fill="#ddd"/></g>
<path d="M745.7 94.6 L750.3 102.6 M753.8 94.6 L750.3 102.6 L749.5 107 L747.3 113" stroke="#169c57" stroke-width="4.9" />
<path d="M751 126.8 L756.5 128.5" stroke="#169c57" stroke-width="4.4" />
<path d="M785 170.8 H809.2" stroke="#169c57" stroke-width="5.2" />
<path d="M836.8 201.5 L836.1 210" stroke="#169c57" stroke-width="5.2" />
<path d="M828.3 226.2 L840.8 222.7 L849 223.5" stroke="#169c57" stroke-width="5.4" />
<path d="M849.6 217.5 L851.9 229.6 L852.5 243.8" stroke="#169c57" stroke-width="6.2" />
<path d="M743 314.7 L752.1 289 Q754 283 764.2 278.4 L780.9 266.3 L788.4 272.3" stroke="#169c57" stroke-width="4.6000000000000005" />
<path d="M793.9 299.5 L796 310.1" stroke="#169c57" stroke-width="4.4" />
<path d="M630.8 258.4 L638.9 256.8 L644.6 266" stroke="#169c57" stroke-width="4.4" />
<path d="M795.8 425.1 Q799.5 441 790.7 455.1 Q786 461 777.8 465.6" stroke="#169c57" stroke-width="4.0" />
<path d="M766.7 470.8 Q761.5 484 769.5 492.5 Q779 498.5 790 495.2 L800 490.2" stroke="#169c57" stroke-width="4.2" />
<path d="M912.2 427.2 Q920 425 927.5 429" stroke="#169c57" stroke-width="5.4" />
<path d="M735.9 506.5 L749.7 497.3" stroke="#169c57" stroke-width="4.6000000000000005" />
<path d="M953.6 465.6 L956.8 472.6" stroke="#169c57" stroke-width="4.6000000000000005" />
<path d="M959.6 482.7 L962.6 491.5 L964.4 500.7" stroke="#169c57" stroke-width="4.9" />
<path d="M962.1 533.8 L972 535.2" stroke="#169c57" stroke-width="5.4" />
<path d="M1008.6 521.5 L1006.7 534" stroke="#169c57" stroke-width="5.4" />
<path d="M1079.4 443.5 L1096.7 439.3" stroke="#169c57" stroke-width="4.9" />
<path d="M1095.1 488.5 L1102.5 484.1 L1112.9 485.3 L1112.9 490.4" stroke="#169c57" stroke-width="4.9" />
<path d="M1137.1 501.4 L1144.5 502.4" stroke="#169c57" stroke-width="5.4" />
<path d="M1141 520.4 L1144 520.2" stroke="#169c57" stroke-width="5.4"  stroke-linecap="round"/>
<path d="M996.7 586.5 L1009.8 591.5" stroke="#169c57" stroke-width="4.9" />
<path d="M963.2 601.9 L964.4 615.8 L968.3 629.6" stroke="#169c57" stroke-width="5.4" />
<path d="M773.8 544.6 L784.2 555.4" stroke="#169c57" stroke-width="4.9" />
<path d="M748.4 617.3 L766.9 625.4" stroke="#169c57" stroke-width="5.4" />
<path d="M532.6 611.5 Q531.5 620 528.5 628 Q527.3 636 531.5 643.8" stroke="#169c57" stroke-width="4.4" />
<path d="M566.6 639.2 L569.6 648.4" stroke="#169c57" stroke-width="5.9" />
<path d="M703.5 782.4 L709.3 795" stroke="#169c57" stroke-width="5.9" />
<path d="M783.3 744.3 L797.7 749.6" stroke="#169c57" stroke-width="4.6000000000000005" />
<polygon points="595.7,257.8 602.5,264.6 595.7,271.4 588.9,264.6" fill="#169c57" stroke="none"/>
<polygon points="692.6,726.8 695.8,729.3 689,741 691.5,751.5 687.5,753.5 685,749.5 682.5,760.5 679,762 674.2,752.2" fill="#169c57" stroke="none"/>
<path d="M689.7 321.6 L696.6 320.2" stroke="#1c6b40" stroke-width="5.0" />
<path d="M651.6 397 L655 392.3" stroke="#1c6b40" stroke-width="4.9" />
<path d="M660.6 389.6 L663.6 388.2" stroke="#1c6b40" stroke-width="4.9" />
<path d="M617 173 V181" stroke="#7a2df2" stroke-width="4.9" />
<path d="M616.5 193.4 H624" stroke="#7a2df2" stroke-width="4.9" />
<path d="M628.5 195 L636 195.8" stroke="#7a2df2" stroke-width="4.9" />
<path d="M765.3 110.7 L768 110" stroke="#7a2df2" stroke-width="6.4"  stroke-linecap="round"/>
<path d="M760.6 115.5 L762.4 122" stroke="#7a2df2" stroke-width="4.9" />
<path d="M754.8 130.5 L760 134.5" stroke="#7a2df2" stroke-width="5.4" />
<path d="M755.5 141.5 L761 137.5" stroke="#7a2df2" stroke-width="5.4" />
<path d="M811.5 185.8 L817.3 190.4" stroke="#7a2df2" stroke-width="4.9" />
<path d="M660.8 278.5 L667.7 279.2" stroke="#7a2df2" stroke-width="4.9" />
<path d="M672.8 280.6 L678.3 280.3 L681.3 275.3" stroke="#7a2df2" stroke-width="4.9" />
<path d="M648.1 293 L655 291.9" stroke="#7a2df2" stroke-width="4.9" />
<path d="M651.6 336.5 L658.5 335.3" stroke="#7a2df2" stroke-width="4.9" />
<path d="M663.1 334.6 H671.2" stroke="#7a2df2" stroke-width="4.9" />
<path d="M628.5 397.7 L640 394.7" stroke="#7a2df2" stroke-width="5.2" />
<path d="M684.4 471.9 L685 478 M685.3 482.5 L685.8 490.4" stroke="#7a2df2" stroke-width="4.9" />
<path d="M722 476.5 L723.6 483.4" stroke="#7a2df2" stroke-width="4.9" />
<path d="M744.6 483.3 L749.6 478.8 M752.4 476.3 L757 472.2" stroke="#7a2df2" stroke-width="4.6000000000000005" />
<path d="M730.1 527.3 L735.9 529.6" stroke="#7a2df2" stroke-width="4.9" />
<path d="M738.2 534.2 L744 540" stroke="#7a2df2" stroke-width="4.9" />
<path d="M705.8 553.9 L713.9 548.1" stroke="#7a2df2" stroke-width="7.4" />
<path d="M731.2 556.2 L740.5 560.8" stroke="#7a2df2" stroke-width="6.4" />
<path d="M677 566.6 L683.9 575.8 L690.8 568.9" stroke="#7a2df2" stroke-width="5.9" />
<path d="M620.4 593.1 L629.6 592.4" stroke="#7a2df2" stroke-width="5.9" />
<path d="M963.9 608.1 L969.7 607" stroke="#7a2df2" stroke-width="4.9" />
<path d="M975.5 604.7 L980.1 602.4" stroke="#7a2df2" stroke-width="4.9" />
<path d="M575.8 241.2 L610 271 L612.3 278.5" stroke="#7a2df2" stroke-width="5.0" stroke-dasharray="11.5 4.3"/>
<path d="M622.5 417.8 L659.7 448.8" stroke="#7a2df2" stroke-width="5.0" stroke-dasharray="9.5 4.6"/>
<path d="M671 218 L675 226 L676.5 238 L679.5 247.5 L677.5 251.5" stroke="#ff9610" stroke-width="5.4" />
<path d="M664.6 253.6 L666.2 253.4" stroke="#ff9610" stroke-width="6.0"  stroke-linecap="round"/>
<path d="M800 157.8 L802 153.6 L804.5 153.6 L808 157.8" stroke="#ff9610" stroke-width="4.9" />
<path d="M740.5 303.4 L750.9 297.7" stroke="#ff9610" stroke-width="4.4" />
<path d="M720.9 377.8 L722.1 377.8" stroke="#ff9610" stroke-width="8.0"  stroke-linecap="round"/>
<path d="M697.8 444.3 L702.4 427 L716.2 425.8" stroke="#ff9610" stroke-width="4.9" />
<path d="M800.4 404.2 L805.2 404.2 Q808 402.5 809.3 398" stroke="#ff9610" stroke-width="4.6000000000000005" />
<path d="M805.2 413 L819.8 417.1" stroke="#ff9610" stroke-width="4.0" />
<path d="M954.5 334.5 L955.1 334.5" stroke="#ff9610" stroke-width="6.2"  stroke-linecap="round"/>
<path d="M1033.2 451.3 L1026.3 465 L1016.6 475.3" stroke="#ff9610" stroke-width="4.4" />
<path d="M1064.8 457.5 L1065.4 457.5" stroke="#ff9610" stroke-width="7.4"  stroke-linecap="round"/>
<path d="M1089.8 486.9 L1092.1 491.5 L1088.6 495 L1094.4 493.8" stroke="#ff9610" stroke-width="4.6000000000000005" />
<path d="M1102.5 505.4 L1107.1 507.7 L1112.9 506.5" stroke="#ff9610" stroke-width="4.6000000000000005" />
<path d="M983.6 548.7 L978.9 548.9 L975.9 560.5 L979.2 568" stroke="#ff9610" stroke-width="4.6000000000000005" />
<path d="M930.9 610 L946 611 L960.9 608.8" stroke="#ff9610" stroke-width="4.6000000000000005" />
<path d="M943.6 601.9 L949.4 601.9 L967.9 588.5 L981.7 608.8" stroke="#ff9610" stroke-width="4.6000000000000005" />
<path d="M934.4 593.8 L940.1 599.6" stroke="#ff9610" stroke-width="4.4" />
<path d="M944.8 592.7 L949.4 597.3" stroke="#ff9610" stroke-width="4.4" />
<path d="M562.9 690 L565 696.5 L562.9 702.5" stroke="#ff9610" stroke-width="6.4"  stroke-linecap="round"/>
<path d="M957 335 L958 335" stroke="#ff9610" stroke-width="4.4"  stroke-linecap="round"/>
<path d="M627.3 252.6 L628.5 270" stroke="#22bff0" stroke-width="5.0" />
<path d="M809.2 221.6 Q813 218.3 817.6 216.5 M820 215.6 L826.4 212.6" stroke="#22bff0" stroke-width="5.4" />
<path d="M865.8 188 L862 197" stroke="#22bff0" stroke-width="5.0" />
<path d="M858.3 201.2 L856.7 209 L858.4 220.6" stroke="#22bff0" stroke-width="5.2" />
<path d="M830.4 210.9 L849.8 229.6" stroke="#22bff0" stroke-width="5.800000000000001" />
<path d="M849.8 230.5 L843 232.2 L841.3 235 L841.1 241.4" stroke="#22bff0" stroke-width="5.2" />
<path d="M618 315 L619.2 309.4 L625 309.4 L630.8 313.8" stroke="#22bff0" stroke-width="4.9" />
<path d="M633.1 319.6 L638.9 325.4" stroke="#22bff0" stroke-width="4.9" />
<path d="M642.3 327.7 L641.2 334.6" stroke="#22bff0" stroke-width="4.9" />
<path d="M675.8 332.3 L674.2 339.2" stroke="#22bff0" stroke-width="4.9" />
<path d="M687.4 328.8 L705.8 327.7" stroke="#22bff0" stroke-width="4.9" />
<path d="M724.3 309.8 V317.8" stroke="#22bff0" stroke-width="6.4" />
<path d="M799.3 282.5 L808 292" stroke="#22bff0" stroke-width="4.9" />
<path d="M868.8 293.8 L875.5 294.8 L872 297.6 Z" stroke="#22bff0" stroke-width="2.9" />
<path d="M708 438.5 L716.2 454.6 L711.6 459.2" stroke="#22bff0" stroke-width="4.9" />
<path d="M751.5 506.9 L758.4 512.4" stroke="#22bff0" stroke-width="6.0" />
<path d="M1015.2 489.2 L1032.1 496.1" stroke="#22bff0" stroke-width="4.9" />
<path d="M1035.5 497.3 L1042 500" stroke="#22bff0" stroke-width="4.9" />
<path d="M779.7 695.1 L798.8 698.8" stroke="#22bff0" stroke-width="5.4" />
<path d="M772 719.1 L776.2 719.6" stroke="#22bff0" stroke-width="6.2"  stroke-linecap="round"/>
<path d="M830 342.5 V352" stroke="#22bff0" stroke-width="4.9" />
<path d="M830 345.2 H838.5" stroke="#22bff0" stroke-width="3.6" />
<path d="M838 346 V351" stroke="#22bff0" stroke-width="2.0" />
<path d="M823.8 367.8 L805.2 384.8" stroke="#22bff0" stroke-width="5.4" />
<path d="M807 383 L819 394.5" stroke="#22bff0" stroke-width="8.9" />
<path d="M836 375.9 L842.4 378.3" stroke="#22bff0" stroke-width="4.4" />
<path d="M827.9 442.9 Q819.5 434 820.6 425 Q820 410 829.5 403.3 Q838 397.5 848 398.5 Q861 400.5 867 411 Q871.5 421 866.5 427.5 L863 430" stroke="#22bff0" stroke-width="6.0" />
<path d="M810.9 402.5 L820.6 413" stroke="#22bff0" stroke-width="4.4" />
<path d="M828.7 389.6 L841.6 414.7" stroke="#22bff0" stroke-width="4.4" />
<path d="M843.2 388.8 L836 402.5" stroke="#22bff0" stroke-width="4.4" />
<path d="M852.9 425.2 L854.5 425.2" stroke="#22bff0" stroke-width="5.4"  stroke-linecap="round"/>
<path d="M858.6 434.9 L855.3 439.7" stroke="#22bff0" stroke-width="4.4" />
<path d="M876.4 421.9 L894.1 425.2" stroke="#22bff0" stroke-width="4.6000000000000005" />
<path d="M884.4 424.5 L887.4 430.3" stroke="#22bff0" stroke-width="4.9" />
<path d="M890 424 L893.5 427.5" stroke="#22bff0" stroke-width="4.4" />
<path d="M916 374 V381" stroke="#22bff0" stroke-width="5.4" />
<path d="M907.1 391.2 L912.7 396.9" stroke="#22bff0" stroke-width="5.4" />
<path d="M984 366.2 L1009 367.6 M1011.7 369.9 L1025.6 367.1 L1036.7 362.9 M989.6 366.2 L989.1 384.2 M989.6 390.6 L989.1 404.5 L986.8 408.2 M994.8 366.6 L994.2 381.4 M995.1 368.5 L1002.5 375.9 L1001.6 386.9 M1001.6 375.9 V401.7 L1008 422.1 M982.2 384.6 L993.2 387 H1023.7 M1012.6 387 V402.2 M1019.1 387 L1018.7 399.9 M1024.7 380.5 L1025.1 397.1 M1036.7 362.9 V381.4 M1020 380.5 L1032 374 L1036.7 372.2 M1029.3 377.7 L1030.2 385.1 L1036.7 387.9 M1023.7 362 L1024.7 367.6 M1012.6 362.9 V370.3 M1002.5 363.9 L1003.4 371.2 M1007.1 363.9 V371.2" stroke="#22bff0" stroke-width="4.3" stroke-linecap="round"/>
<path d="M751.9 514.6 L762.3 524.5" stroke="#ff1616" stroke-width="4.6000000000000005" stroke-linecap="butt"/>
<path d="M963.9 608.1 L969.7 607" stroke="#7a2df2" stroke-width="4.9" />
<path d="M975.5 604.7 L980.1 602.4" stroke="#7a2df2" stroke-width="4.9" />
</g></g></svg>
<!--/MAPSVG-->
<div class="mb" style="left:11px;top:13px;height:75px"><svg width="38" height="75" viewBox="0 0 38 75" fill="none" stroke="#076cc4" stroke-width="1.6"><path d="M12.9 17.9 H25.3 M19.1 11.7 V24.1"/><path d="M12.9 55.4 H25.3"/><path d="M0 37.3 H38" stroke="#e3e3e3" stroke-width="1"/></svg></div>
<div class="mb" style="left:11px;top:99px"><svg width="38" height="38" viewBox="524 167 38 38" fill="none" stroke="#076cc4" stroke-width="1.7"><path d="M535.1 194.1 V181.6 L543.4 174.9 L551.7 181.6 V194.1 H546.3 V186.3 H540.5 V194.1 Z"/></svg></div>
<div class="mb" style="left:11px;top:147.5px"><svg width="38" height="38" viewBox="524 215.5 38 38" fill="none" stroke="#076cc4"><circle cx="543.4" cy="233.7" r="8.9" stroke-width="1.7"/><circle cx="543.4" cy="233.7" r="3.8" stroke-width="2"/><path d="M543.4 221.2 V225 M543.4 242.4 V246.2 M530.9 233.7 H534.7 M552.1 233.7 H555.9" stroke-width="1.7"/></svg></div>
<div class="mb" style="left:11px;top:745px;background:#076cc4"><svg width="38" height="38" viewBox="524 813 38 38" fill="none" stroke="#fff" stroke-width="1.8"><path d="M537.4 821.7 V839.6 L541.7 835.6 L545.4 842.8 L548.2 841.4 L544.7 834.3 L550.7 832.7 Z"/></svg></div>
<div class="mb" style="left:60px;top:745px"><svg width="38" height="38" viewBox="573 813 38 38" fill="none" stroke="#076cc4" stroke-width="2"><circle cx="588.2" cy="828.9" r="6.2"/><path d="M592.8 833.5 L600.7 841.1"/><path d="M585.2 828.9 H591.2 M588.2 825.9 V831.9" stroke-width="1.5"/></svg></div>
<div class="mb" style="left:108px;top:745px"><svg width="38" height="38" viewBox="621 813 38 38" fill="none" stroke="#076cc4" stroke-width="2"><circle cx="637" cy="828.9" r="6.2"/><path d="M641.6 833.5 L650 841.1"/><path d="M634 828.9 H640" stroke-width="1.5"/></svg></div>
<div class="mb" style="left:157px;top:745px"><svg width="38" height="38" viewBox="670 813 38 38"><g transform="rotate(-42 688.8 831.5)"><rect x="676.3" y="827.3" width="25" height="8.4" rx="1" fill="#076cc4"/><path d="M680.5 827.3 v3.2 M684.5 827.3 v4.2 M688.5 827.3 v3.2 M692.5 827.3 v4.2 M696.5 827.3 v3.2" stroke="#fff" stroke-width="1.3"/><circle cx="679" cy="833.3" r=".8" fill="#fff"/></g></svg></div>
<div class="mb" style="left:206px;top:745px"><svg width="38" height="38" viewBox="719 813 38 38"><path d="M726.8 842.2 Q725.2 840.6 726.8 839.2 L745.6 821.3 Q748.6 819.4 748.6 822.6 V840.6 Q748.6 842.2 747 842.2 Z" fill="#076cc4"/><path d="M735.4 837.5 H744.3 V829 Z" fill="#fff"/><path d="M730.5 836.5 l1.6 1.6 M733.5 833.6 l2.2 2.2 M736.5 830.7 l1.6 1.6 M739.5 827.8 l2.2 2.2 M742.5 824.9 l1.6 1.6" stroke="#fff" stroke-width="1"/></svg></div>
<div class="mb" style="left:254px;top:745px"><svg width="38" height="38" viewBox="767 813 38 38"><path d="M785.4 821.9 H778 Q776.5 821.9 776.5 823.4 V840.1 Q776.5 841.6 778 841.6 H785.4 Z" fill="#076cc4"/><path d="M778.3 839.8 H784.6 V832 Z" fill="#fff"/><path d="M785.4 822.8 H795 Q795.8 822.8 795.8 823.6 V840 Q795.8 840.8 795 840.8 H785.4" fill="none" stroke="#076cc4" stroke-width="1.7"/><path d="M786.2 830.5 L795.5 841.3 H786.2 Z" fill="#076cc4"/><path d="M785.4 819 V844.2" stroke="#076cc4" stroke-width="1.9"/></svg></div>
<div class="mb" style="left:303px;top:745px"><svg width="38" height="38" viewBox="816 813 38 38" fill="none" stroke="#076cc4" stroke-width="2"><circle cx="834.3" cy="831.6" r="6.6"/><path d="M834.3 821.8 V825.6 M834.3 837.6 V841.4 M824.5 831.6 H828.3 M840.3 831.6 H844.1" stroke-width="1.8"/></svg></div>
<svg class="abs" style="left:546px;top:729px" width="128" height="22" viewBox="1059 797 128 22" fill="none" stroke-width="3.1" stroke-linejoin="miter">
<clipPath id="ncl"><rect x="1060" y="799.4" width="18" height="16.7"/></clipPath><g stroke="#222"><path d="M1062.4 816.1 V799.4 M1075.5 816.1 V799.4 M1061.4 798.1 L1076.5 817.4" clip-path="url(#ncl)"/><path d="M1083 800.9 H1095.9 V814.7 H1083 M1085.5 807.8 H1095.9"/><path d="M1102.5 799.4 L1110.8 808.5 M1116.3 816.1 L1109 808"/><path d="M1121.8 800.9 H1136.4 M1129.1 800.9 V816.1"/></g>
<g stroke="#076cc4"><path d="M1116.3 799.4 L1102.5 816.1"/><path d="M1156 803.3 Q1153.5 800.8 1149.6 800.8 Q1142.5 800.8 1142.5 807.8 Q1142.5 814.7 1149.6 814.7 Q1154 814.7 1156.2 812.2 V808.3 H1149.8"/><path d="M1164.5 799.4 V816.1"/><path d="M1182.8 802.8 Q1180.8 800.7 1177.3 800.7 Q1172.6 800.7 1172.6 804.2 Q1172.6 807 1177.6 807.8 Q1182.9 808.7 1182.9 811.6 Q1182.9 814.8 1177.6 814.8 Q1173.8 814.8 1171.6 812.3"/></g></svg>
<div class="abs" style="left:473px;top:764.5px;width:211px;height:27.5px;background:rgba(255,255,255,.55)"></div>
<svg class="abs" style="left:473px;top:764px" width="40" height="28" viewBox="986 832 40 28" fill="none"><circle cx="995.1" cy="846.7" r="7" stroke="#555" stroke-width="1.2"/><path d="M995.1 845.6 V850.6" stroke="#555" stroke-width="1.4"/><circle cx="995.1" cy="843.2" r=".9" fill="#555"/></svg>
<div class="abs" style="left:506px;top:769px;width:81px;height:20.5px;border:1px solid #444;border-top:0;font-size:12.5px;line-height:20px;color:#555;text-align:center"><span id="km">5 km</span></div>
<div class="abs" id="scl" style="left:610px;top:770px;font-size:13.1px;line-height:20px;color:#666;white-space:nowrap">1 : 545 979</div>
</div>
<div id="pedge"></div><div id="hline" class="abs" style="left:0;top:68px;width:1197px;height:1px;background:#e9eaec"></div><div class="abs" style="left:0;top:68px;width:67px;height:1px;background:#f4f3f3"></div><div id="phandle"></div>
<div id="bottom"></div><div id="bdots" class="abs" style="left:1042px;top:861px;width:17px;height:1.4px;background:repeating-linear-gradient(90deg,#222 0,#222 1.4px,transparent 1.4px,transparent 2.7px)"></div>
</div>
</body>
</html>
